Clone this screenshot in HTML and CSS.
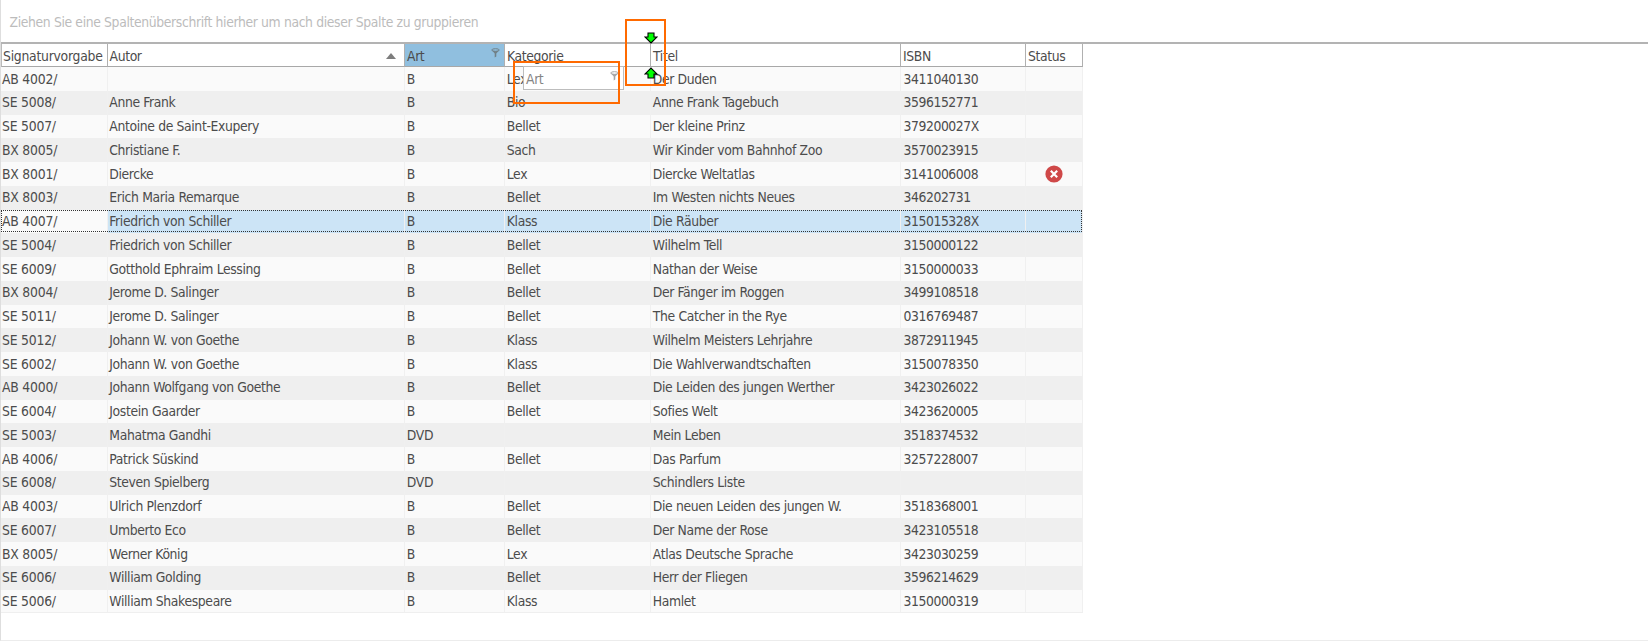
FILE: index.html
```
<!DOCTYPE html>
<html lang="de">
<head>
<meta charset="utf-8">
<title>Medienliste</title>
<link rel="stylesheet" href="styles.css">
</head>
<body>
<main class="grid">
  <div class="group-panel"><span>Ziehen Sie eine Spaltenüberschrift hierher um nach dieser Spalte zu gruppieren</span></div>
  <div class="header">
    <div class="head sig"><span>Signaturvorgabe</span></div>
    <div class="head"><span>Autor</span><i class="sort"></i></div>
    <div class="head dragged"><span>Art</span><svg class="funnel" viewBox="0 0 9 10"><ellipse cx="4.5" cy="2" rx="3.8" ry="1.3"/><path d="M.7 2.2 3.7 5.5V9.4L5.3 8.6V5.5L8.3 2.2Q4.5 4.2.7 2.2Z"/></svg></div>
    <div class="head"><span>Kategorie</span></div>
    <div class="head"><span>Titel</span></div>
    <div class="head"><span>ISBN</span></div>
    <div class="head"><span>Status</span></div>
  </div>
  <div class="rows" id="rows"></div>
</main>
<div class="ghost"><span>Art</span><svg class="funnel" viewBox="0 0 9 10"><ellipse cx="4.5" cy="2" rx="3.8" ry="1.3"/><path d="M.7 2.2 3.7 5.5V9.4L5.3 8.6V5.5L8.3 2.2Q4.5 4.2.7 2.2Z"/></svg></div>
<svg class="arrow down" viewBox="0 0 14 12"><path d="M4 1H10V5H13L7 11 1 5H4Z"/></svg>
<svg class="arrow up" viewBox="0 0 14 12"><path d="M4 11H10V7H13L7 1 1 7H4Z"/></svg>
<div class="frame frame-ghost"></div>
<div class="frame frame-target"></div>
<script src="rows.js"></script>
</body>
</html>
```
FILE: styles.css
```
body {
  margin: 0;
  background: #fff;
  color: #4c4c4c;
  font: 13.8px/18px "DejaVu Sans Condensed", "DejaVu Sans", Tahoma, sans-serif;
  font-stretch: condensed;
  letter-spacing: -0.36px;
  overflow: hidden;
}
.grid {
  box-sizing: border-box;
  width: 1648px;
  height: 641px;
  border-left: 1px solid #dedede;
  border-bottom: 1px solid #ececec;
}
.group-panel {
  box-sizing: border-box;
  height: 44px;
  padding: 13px 0 0 8.5px;
  border-bottom: 2px solid #b3b3b3;
  color: #bcbcbc;
  white-space: nowrap;
}
.header, .row {
  display: grid;
  grid-template-columns: 106.5px 297.5px 100px 146px 250px 125px 56.5px;
  width: 1081.5px;
}
.header { height: 23px; }
.head {
  box-sizing: border-box;
  display: flex;
  justify-content: space-between;
  padding: 3px 0 0 2px;
  border-right: 1px solid #b0b0b0;
  border-bottom: 1px solid #a8a8a8;
  white-space: nowrap;
}
.head.sig { border-left: 1px solid #bbb; padding-left: 1px; letter-spacing: -0.25px; }
.dragged { background: #90bfdf; }
.sort {
  width: 0;
  height: 0;
  margin: 6px 8px 0 0;
  border: 5px solid transparent;
  border-top: 0;
  border-bottom: 6px solid #7d7d7d;
}
.funnel { width: 9px; height: 10px; margin: 1px 4px 0 0; }
.funnel ellipse { fill: none; stroke: #718087; }
.funnel path { fill: #718087; }
.row { height: 23.75px; background: #fafafa; }
.row:nth-child(even) { background: #efefef; }
.row:last-child { border-bottom: 1px solid #efefef; box-sizing: border-box; }
.cell {
  box-sizing: border-box;
  padding: 2.5px 0 0 1.8px;
  border-right: 1px solid #f0f0f0;
  white-space: nowrap;
}
.cell:first-child { padding-left: 1px; }
.cell:first-child { letter-spacing: -0.2px; }
.cell:nth-child(6) { padding-left: 2.5px; letter-spacing: -0.42px; }
.selected { position: relative; }
.selected .cell:not(:first-child) { background: #cce4f6; }
.selected::after {
  content: "";
  position: absolute;
  inset: 0 1px 1px 0;
  border: 1px dotted #333;
}
.error { display: block; width: 18px; height: 18px; margin: 0 auto; position: relative; left: -1px; }
.ghost {
  position: absolute;
  left: 523px;
  top: 66px;
  display: flex;
  justify-content: space-between;
  box-sizing: border-box;
  width: 101px;
  height: 24px;
  padding: 3px 0 0 2px;
  border: 1px solid #bdbdbd;
  background: #fff;
  color: #858585;
}
.ghost .funnel ellipse { stroke: #a5a5a5; }
.ghost .funnel path { fill: #a5a5a5; }
.arrow {
  position: absolute;
  left: 644px;
  width: 14px;
  height: 12px;
  fill: #0f0;
  stroke: #000;
  stroke-width: 1.1;
}
.down { top: 31.5px; }
.up { top: 67px; }
.frame { position: absolute; box-sizing: border-box; border: 2px solid #ff6a00; }
.frame-ghost { left: 513px; top: 61px; width: 107px; height: 43px; }
.frame-target { left: 625px; top: 19px; width: 41px; height: 67px; }
```
FILE: rows.js
```
const items = [
  ["AB 4002/", "", "B", "Lex", "Der Duden", "3411040130"],
  ["SE 5008/", "Anne Frank", "B", "Bio", "Anne Frank Tagebuch", "3596152771"],
  ["SE 5007/", "Antoine de Saint-Exupery", "B", "Bellet", "Der kleine Prinz", "379200027X"],
  ["BX 8005/", "Christiane F.", "B", "Sach", "Wir Kinder vom Bahnhof Zoo", "3570023915"],
  ["BX 8001/", "Diercke", "B", "Lex", "Diercke Weltatlas", "3141006008", "error"],
  ["BX 8003/", "Erich Maria Remarque", "B", "Bellet", "Im Westen nichts Neues", "346202731"],
  ["AB 4007/", "Friedrich von Schiller", "B", "Klass", "Die Räuber", "315015328X", "selected"],
  ["SE 5004/", "Friedrich von Schiller", "B", "Bellet", "Wilhelm Tell", "3150000122"],
  ["SE 6009/", "Gotthold Ephraim Lessing", "B", "Bellet", "Nathan der Weise", "3150000033"],
  ["BX 8004/", "Jerome D. Salinger", "B", "Bellet", "Der Fänger im Roggen", "3499108518"],
  ["SE 5011/", "Jerome D. Salinger", "B", "Bellet", "The Catcher in the Rye", "0316769487"],
  ["SE 5012/", "Johann W. von Goethe", "B", "Klass", "Wilhelm Meisters Lehrjahre", "3872911945"],
  ["SE 6002/", "Johann W. von Goethe", "B", "Klass", "Die Wahlverwandtschaften", "3150078350"],
  ["AB 4000/", "Johann Wolfgang von Goethe", "B", "Bellet", "Die Leiden des jungen Werther", "3423026022"],
  ["SE 6004/", "Jostein Gaarder", "B", "Bellet", "Sofies Welt", "3423620005"],
  ["SE 5003/", "Mahatma Gandhi", "DVD", "", "Mein Leben", "3518374532"],
  ["AB 4006/", "Patrick Süskind", "B", "Bellet", "Das Parfum", "3257228007"],
  ["SE 6008/", "Steven Spielberg", "DVD", "", "Schindlers Liste", ""],
  ["AB 4003/", "Ulrich Plenzdorf", "B", "Bellet", "Die neuen Leiden des jungen W.", "3518368001"],
  ["SE 6007/", "Umberto Eco", "B", "Bellet", "Der Name der Rose", "3423105518"],
  ["BX 8005/", "Werner König", "B", "Lex", "Atlas Deutsche Sprache", "3423030259"],
  ["SE 6006/", "William Golding", "B", "Bellet", "Herr der Fliegen", "3596214629"],
  ["SE 5006/", "William Shakespeare", "B", "Klass", "Hamlet", "3150000319"]
];
const errorIcon = '<svg class="error" viewBox="0 0 18 18"><circle cx="9" cy="9" r="8.6" fill="#cf4848"/><path d="M5.8 5.8 12.2 12.2M12.2 5.8 5.8 12.2" stroke="#fff" stroke-width="2.2"/></svg>';
document.getElementById("rows").innerHTML = items.map(item => {
  const flag = item[6];
  const cells = item.slice(0, 6).map(text => `<div class="cell"><span>${text}</span></div>`).join("");
  return `<div class="row ${flag === "selected" ? "selected" : ""}">${cells}<div class="cell">${flag === "error" ? errorIcon : ""}</div></div>`;
}).join("");
```
